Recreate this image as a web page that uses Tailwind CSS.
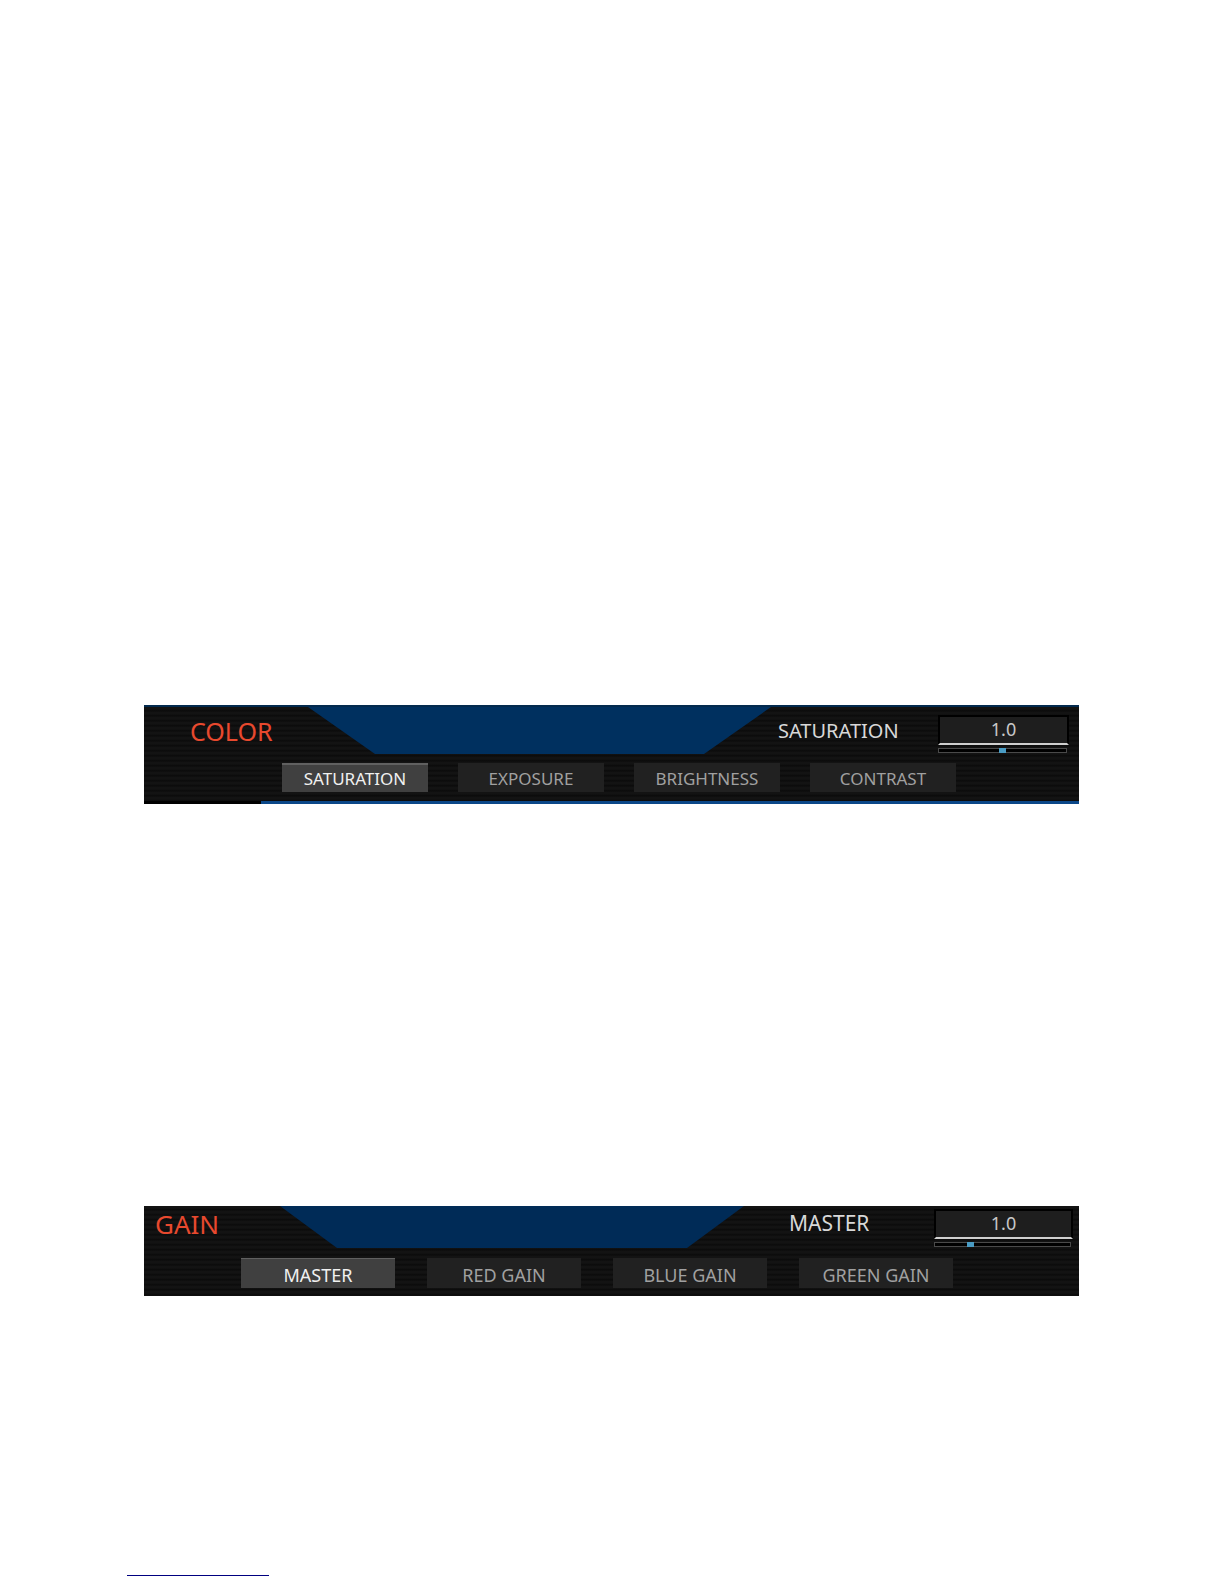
<!DOCTYPE html>
<html lang="en">
<head>
  <meta charset="UTF-8" />
  <meta name="viewport" content="width=device-width, initial-scale=1.0"/>
  <title>Color and Gain</title>
  <script src="https://cdn.jsdelivr.net/npm/@tailwindcss/browser@4"></script>
</head>
<body class="bg-white min-h-screen flex flex-col font-['Noto_Sans',sans-serif]">

  <main class="pt-[705px] pl-36 pr-[145px]">

    <!-- Color panel -->
    <section class="h-[99px] flex flex-col border-t-2 border-[#032a4e] bg-[repeating-linear-gradient(#131313_0px,#131313_2px,#0a0a0a_4px,#131313_5px)]">
      <div class="flex items-start">
        <h2 class="w-[164px] shrink-0 pl-[46px] pt-2 text-[25px] leading-8 text-[#e8492e]">COLOR</h2>
        <div class="flex-1 h-[47px] bg-[#00305f] [clip-path:polygon(0_0,100%_0,calc(100%-67px)_100%,67px_100%)]"></div>
        <div class="w-[308px] shrink-0 flex justify-between items-start pl-[7px] pr-[10px] pt-2">
          <label for="saturation" class="pt-1 text-[20px] leading-6 text-[#d8d8d8]">SATURATION</label>
          <div class="w-[131px] flex flex-col">
            <input id="saturation" type="text" value="1.0"
              class="w-full h-[30px] pb-[3px] bg-[#1e1e1e] border-2 border-black border-b-[#d0d0d0] text-center text-[18px] leading-6 text-[#c8c8c8] outline-none" />
            <input type="range" min="0" max="2" step="0.1" value="1" aria-label="Saturation slider"
              class="appearance-none mt-[3px] h-[5px] w-[129px] bg-black border border-[#4a4a4a] [&::-webkit-slider-thumb]:appearance-none [&::-webkit-slider-thumb]:w-[7px] [&::-webkit-slider-thumb]:h-[5px] [&::-webkit-slider-thumb]:bg-[#4a9cc4]" />
          </div>
        </div>
      </div>
      <div class="flex gap-[30px] pl-[138px] pt-[9px]">
        <button class="w-[146px] h-[29px] pt-px bg-[#404040] border-t-2 border-[#606060] text-[17px] leading-6 text-[#f0f0f0]">SATURATION</button>
        <button class="w-[146px] h-[29px] pt-[3px] bg-[#212121] text-[17px] leading-6 text-[#a0a0a0]">EXPOSURE</button>
        <button class="w-[146px] h-[29px] pt-[3px] bg-[#212121] text-[17px] leading-6 text-[#a0a0a0]">BRIGHTNESS</button>
        <button class="w-[146px] h-[29px] pt-[3px] bg-[#212121] text-[17px] leading-6 text-[#a0a0a0]">CONTRAST</button>
      </div>
      <div class="mt-auto flex h-[3px]">
        <div class="w-[117px] bg-black"></div>
        <div class="flex-1 bg-[#0b4788]"></div>
      </div>
    </section>

    <!-- Gain panel -->
    <section class="mt-[402px] h-[90px] bg-[repeating-linear-gradient(#131313_0px,#131313_2px,#0a0a0a_4px,#131313_5px)]">
      <div class="flex items-start">
        <h2 class="w-[136px] shrink-0 pl-[11px] pt-[2px] text-[26px] leading-8 text-[#e8492e]">GAIN</h2>
        <div class="flex-1 h-[42px] bg-[#002b57] [clip-path:polygon(0_0,100%_0,calc(100%-57px)_100%,57px_100%)]"></div>
        <div class="w-[335px] shrink-0 flex justify-between items-start pl-[45px] pr-[6px] pt-[3px]">
          <label for="master" class="pt-[2px] text-[21px] leading-6 text-[#d8d8d8]">MASTER</label>
          <div class="w-[139px] flex flex-col">
            <input id="master" type="text" value="1.0"
              class="w-full h-[30px] pb-[3px] bg-[#1e1e1e] border-2 border-black border-b-[#d0d0d0] text-center text-[18px] leading-6 text-[#c8c8c8] outline-none" />
            <input type="range" min="0" max="4" step="0.1" value="1" aria-label="Master slider"
              class="appearance-none mt-[3px] h-[5px] w-[137px] bg-black border border-[#4a4a4a] [&::-webkit-slider-thumb]:appearance-none [&::-webkit-slider-thumb]:w-[7px] [&::-webkit-slider-thumb]:h-[5px] [&::-webkit-slider-thumb]:bg-[#4a9cc4]" />
          </div>
        </div>
      </div>
      <div class="flex gap-8 pl-[97px] pt-[10px]">
        <button class="w-[154px] h-[30px] pt-[2px] bg-[#404040] border-t border-[#606060] text-[18px] leading-6 text-[#f0f0f0]">MASTER</button>
        <button class="w-[154px] h-[30px] pt-[3px] bg-[#212121] text-[18px] leading-6 text-[#a0a0a0]">RED GAIN</button>
        <button class="w-[154px] h-[30px] pt-[3px] bg-[#212121] text-[18px] leading-6 text-[#a0a0a0]">BLUE GAIN</button>
        <button class="w-[154px] h-[30px] pt-[3px] bg-[#212121] text-[18px] leading-6 text-[#a0a0a0]">GREEN GAIN</button>
      </div>
    </section>
  </main>

  <footer class="mt-auto pl-[127px] pb-2">
    <hr class="w-[142px] border-[#000080]" />
  </footer>

</body>
</html>
